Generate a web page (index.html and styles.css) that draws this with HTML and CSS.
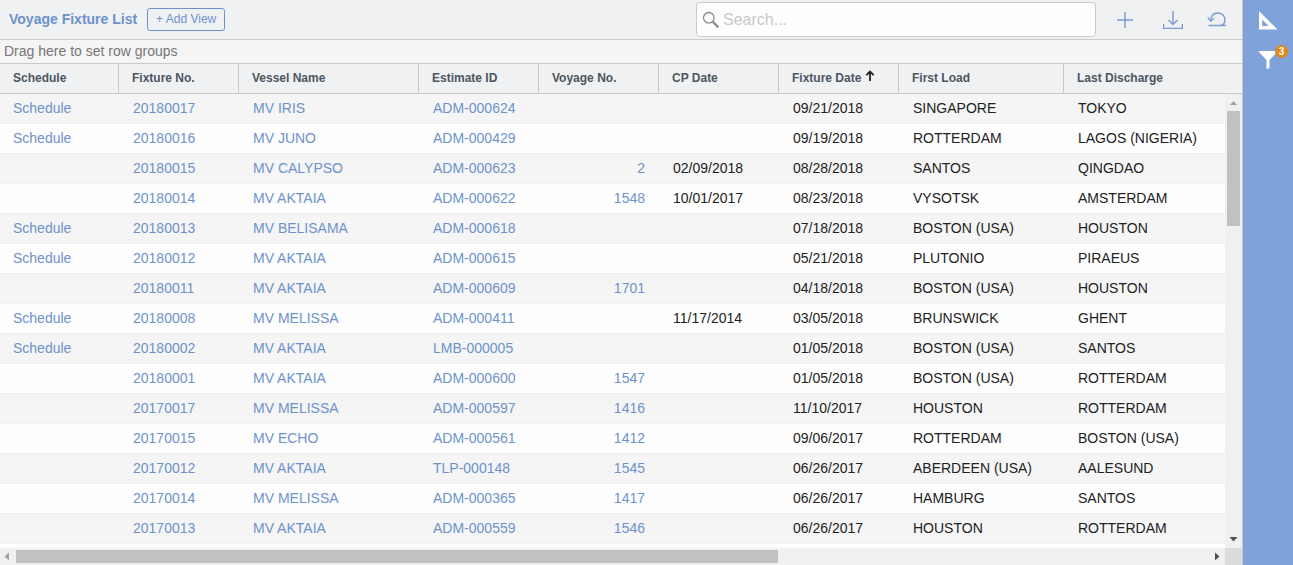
FILE: index.html
```html
<!DOCTYPE html>
<html lang="en">
<head>
<meta charset="utf-8">
<title>Voyage Fixture List</title>
<link rel="stylesheet" href="styles.css">
</head>
<body>
<main class="list">
  <header class="toolbar">
    <h1 class="title">Voyage Fixture List</h1>
    <button class="add-view" type="button">+ Add View</button>
    <label class="search">
      <svg class="search-icon" viewBox="0 0 18 18" aria-hidden="true"><circle cx="6.8" cy="6.8" r="5.3" fill="none" stroke="#8a8a8a" stroke-width="1.3"/><path d="M10.8 10.8L16.4 16.4" stroke="#8a8a8a" stroke-width="2.2"/></svg>
      <input class="search-input" type="search" placeholder="Search..." aria-label="Search">
    </label>
    <div class="actions">
      <button class="icon-button" type="button" aria-label="Add"><svg class="icon" viewBox="0 0 20 20"><path d="M10 2V18M2 10H18"/></svg></button>
      <button class="icon-button" type="button" aria-label="Download"><svg class="icon" viewBox="0 0 20 20"><path d="M10 1V14M5.500 10L10 14.500L14.500 10M.6 14V18.400H19.400V14"/></svg></button>
      <button class="icon-button" type="button" aria-label="Reset"><svg class="icon" viewBox="0 0 20 20"><path d="M3.800 10.500C3.800 6 6.500 3 10.700 3C15 3 18 6 18 9.700C18 12.500 16.500 14.600 14 15.400M1.500 15.500H19"/><path d="M.8 7.500L3.700 11L7.200 8.300"/></svg></button>
    </div>
  </header>
  <div class="groups">Drag here to set row groups</div>
  <section class="grid">
    <table class="table">
      <colgroup><col class="c-first"><col class="c-std"><col class="c-vessel"><col class="c-std"><col class="c-std"><col class="c-std"><col class="c-std"><col class="c-port"><col></colgroup>
      <thead>
        <tr><th>Schedule</th><th>Fixture No.</th><th>Vessel Name</th><th>Estimate ID</th><th>Voyage No.</th><th>CP Date</th><th aria-sort="ascending">Fixture Date<svg class="sort" viewBox="0 0 10 12" aria-hidden="true"><path d="M5 11V1.500M1.300 5.200L5 1.500L8.700 5.200"/></svg></th><th>First Load</th><th>Last Discharge</th></tr>
      </thead>
      <tbody>
        <tr><td><a href="#">Schedule</a></td><td><a href="#">20180017</a></td><td><a href="#">MV IRIS</a></td><td><a href="#">ADM-000624</a></td><td class="num"></td><td></td><td>09/21/2018</td><td>SINGAPORE</td><td>TOKYO</td></tr>
        <tr><td><a href="#">Schedule</a></td><td><a href="#">20180016</a></td><td><a href="#">MV JUNO</a></td><td><a href="#">ADM-000429</a></td><td class="num"></td><td></td><td>09/19/2018</td><td>ROTTERDAM</td><td>LAGOS (NIGERIA)</td></tr>
        <tr><td></td><td><a href="#">20180015</a></td><td><a href="#">MV CALYPSO</a></td><td><a href="#">ADM-000623</a></td><td class="num"><a href="#">2</a></td><td>02/09/2018</td><td>08/28/2018</td><td>SANTOS</td><td>QINGDAO</td></tr>
        <tr><td></td><td><a href="#">20180014</a></td><td><a href="#">MV AKTAIA</a></td><td><a href="#">ADM-000622</a></td><td class="num"><a href="#">1548</a></td><td>10/01/2017</td><td>08/23/2018</td><td>VYSOTSK</td><td>AMSTERDAM</td></tr>
        <tr><td><a href="#">Schedule</a></td><td><a href="#">20180013</a></td><td><a href="#">MV BELISAMA</a></td><td><a href="#">ADM-000618</a></td><td class="num"></td><td></td><td>07/18/2018</td><td>BOSTON (USA)</td><td>HOUSTON</td></tr>
        <tr><td><a href="#">Schedule</a></td><td><a href="#">20180012</a></td><td><a href="#">MV AKTAIA</a></td><td><a href="#">ADM-000615</a></td><td class="num"></td><td></td><td>05/21/2018</td><td>PLUTONIO</td><td>PIRAEUS</td></tr>
        <tr><td></td><td><a href="#">20180011</a></td><td><a href="#">MV AKTAIA</a></td><td><a href="#">ADM-000609</a></td><td class="num"><a href="#">1701</a></td><td></td><td>04/18/2018</td><td>BOSTON (USA)</td><td>HOUSTON</td></tr>
        <tr><td><a href="#">Schedule</a></td><td><a href="#">20180008</a></td><td><a href="#">MV MELISSA</a></td><td><a href="#">ADM-000411</a></td><td class="num"></td><td>11/17/2014</td><td>03/05/2018</td><td>BRUNSWICK</td><td>GHENT</td></tr>
        <tr><td><a href="#">Schedule</a></td><td><a href="#">20180002</a></td><td><a href="#">MV AKTAIA</a></td><td><a href="#">LMB-000005</a></td><td class="num"></td><td></td><td>01/05/2018</td><td>BOSTON (USA)</td><td>SANTOS</td></tr>
        <tr><td></td><td><a href="#">20180001</a></td><td><a href="#">MV AKTAIA</a></td><td><a href="#">ADM-000600</a></td><td class="num"><a href="#">1547</a></td><td></td><td>01/05/2018</td><td>BOSTON (USA)</td><td>ROTTERDAM</td></tr>
        <tr><td></td><td><a href="#">20170017</a></td><td><a href="#">MV MELISSA</a></td><td><a href="#">ADM-000597</a></td><td class="num"><a href="#">1416</a></td><td></td><td>11/10/2017</td><td>HOUSTON</td><td>ROTTERDAM</td></tr>
        <tr><td></td><td><a href="#">20170015</a></td><td><a href="#">MV ECHO</a></td><td><a href="#">ADM-000561</a></td><td class="num"><a href="#">1412</a></td><td></td><td>09/06/2017</td><td>ROTTERDAM</td><td>BOSTON (USA)</td></tr>
        <tr><td></td><td><a href="#">20170012</a></td><td><a href="#">MV AKTAIA</a></td><td><a href="#">TLP-000148</a></td><td class="num"><a href="#">1545</a></td><td></td><td>06/26/2017</td><td>ABERDEEN (USA)</td><td>AALESUND</td></tr>
        <tr><td></td><td><a href="#">20170014</a></td><td><a href="#">MV MELISSA</a></td><td><a href="#">ADM-000365</a></td><td class="num"><a href="#">1417</a></td><td></td><td>06/26/2017</td><td>HAMBURG</td><td>SANTOS</td></tr>
        <tr><td></td><td><a href="#">20170013</a></td><td><a href="#">MV AKTAIA</a></td><td><a href="#">ADM-000559</a></td><td class="num"><a href="#">1546</a></td><td></td><td>06/26/2017</td><td>HOUSTON</td><td>ROTTERDAM</td></tr>
      </tbody>
    </table>
    <div class="scroll-v" aria-hidden="true">
      <svg class="arrow" viewBox="0 0 17 17"><path d="M5 11L8.500 7L12 11Z" fill="#a0a0a0"/></svg>
      <div class="track-v"><div class="thumb-v"></div></div>
      <svg class="arrow" viewBox="0 0 17 17"><path d="M4.500 6H12.500L8.500 10.500Z" fill="#505050"/></svg>
    </div>
  </section>
  <div class="scroll-h" aria-hidden="true">
    <svg class="arrow arrow-left" viewBox="0 0 16 17"><path d="M9 4.500V12.500L4.500 8.500Z" fill="#a0a0a0"/></svg>
    <div class="track-h"><div class="thumb-h"></div></div>
    <svg class="arrow" viewBox="0 0 17 17"><path d="M7 4.500V12.500L11.500 8.500Z" fill="#505050"/></svg>
    <div class="corner"></div>
  </div>
</main>
<aside class="side">
  <button class="side-button" type="button" aria-label="Design"><svg class="side-icon" viewBox="0 0 20 20"><path d="M1 1L19.500 19.500H1ZM4.200 9.500V16H10.700Z" fill="#fff" fill-rule="evenodd"/></svg></button>
  <button class="side-button" type="button" aria-label="Filters, 3 active"><svg class="side-icon" viewBox="0 0 20 20"><path d="M1 1H19V2L11.500 10V18L8.500 19V10L1 2Z" fill="#fff"/></svg><span class="badge">3</span></button>
</aside>
</body>
</html>
```
FILE: styles.css
```css
* { box-sizing: border-box; }

body {
  display: flex;
  height: 100vh;
  margin: 0;
  overflow: hidden;
  background: #fefefe;
  color: #222;
  font: 14px/16px "Liberation Sans", Arial, sans-serif;
}

button { padding: 0; border: 0; background: none; font: inherit; cursor: pointer; }
a { color: #6d92cb; text-decoration: none; }

.list {
  display: flex;
  flex: 1;
  flex-direction: column;
  min-width: 0;
  border-right: 1px solid #c5cad2;
}

.toolbar {
  display: flex;
  align-items: center;
  height: 40px;
  padding: 0 15px 0 9px;
  border-bottom: 1px solid #c8cacc;
  background: #f0f1f3;
}
.title { margin: 0; padding-bottom: 1px; color: #6d92cb; font-size: 14px; line-height: 16px; white-space: nowrap; }
.add-view {
  height: 23px;
  margin-left: 10px;
  padding: 0 8px 2px;
  border: 1px solid #6d92cb;
  border-radius: 3px;
  color: #6d92cb;
  font-size: 12px;
  white-space: nowrap;
}
.search {
  display: flex;
  align-items: center;
  gap: 3px;
  width: 400px;
  height: 35px;
  margin-left: auto;
  padding: 0 5px;
  border: 1px solid #c8cacc;
  border-radius: 4px;
  background: #fefefe;
}
.search-icon { flex: none; width: 18px; height: 18px; }
.search-input {
  flex: 1;
  min-width: 0;
  padding: 0;
  border: 0;
  outline: 0;
  background: none;
  color: #222;
  font: 16px/20px "Liberation Sans", Arial, sans-serif;
}
.search-input::placeholder { color: #c8c8c8; }
.actions { display: flex; gap: 24px; margin-left: 19px; }
.icon-button { display: flex; }
.icon-button:first-child { margin-right: 4px; }
.icon { width: 20px; height: 20px; fill: none; stroke: #789bd2; stroke-width: 1.4; }

.groups {
  height: 24px;
  padding: 3px 4px;
  border-bottom: 1px solid #c8cacc;
  background: #f5f5f5;
  color: #777;
}

.grid { position: relative; flex: 1; min-height: 0; overflow: hidden; }
.table { width: 100%; border-collapse: separate; border-spacing: 0; table-layout: fixed; }
.c-first { width: 119px; }
.c-std { width: 120px; }
.c-vessel { width: 180px; }
.c-port { width: 165px; }
.table th, .table td { height: 30px; padding: 0 14px 2px; text-align: left; white-space: nowrap; }
.table th {
  padding: 0 13px 2px;
  border-right: 1px solid #c8cacc;
  border-bottom: 1px solid #c8cacc;
  background: #f0f1f3;
  color: #4c565f;
  font-size: 12px;
}
.table th:last-child { border-right: 0; }
.table td { border-bottom: 1px solid #f0f0f0; }
.table td:first-child { padding-left: 13px; }
.table tbody tr:nth-child(odd) { background: #f5f5f5; }
.table .num { text-align: right; }
.sort { width: 10px; height: 12px; margin-left: 4px; fill: none; stroke: #222; stroke-width: 1.8; }

.scroll-v {
  position: absolute;
  top: 30px;
  right: 0;
  bottom: 0;
  display: flex;
  flex-direction: column;
  width: 17px;
  background: #f0f0f0;
}
.arrow { flex: none; width: 17px; height: 17px; }
.arrow-left { width: 16px; }
.track-v { flex: 1; padding: 0 2px; }
.thumb-v { height: 27.4%; background: #c1c1c1; }
.scroll-h { display: flex; height: 17px; background: #f0f0f0; }
.track-h { flex: 1; padding: 2px 0; }
.thumb-h { width: 63.9%; height: 100%; background: #c1c1c1; }
.corner { width: 17px; background: #dcdcdc; }

.side {
  display: flex;
  flex: none;
  flex-direction: column;
  align-items: center;
  gap: 20px;
  width: 50px;
  padding-top: 10px;
  background: #7fa2da;
}
.side-button { position: relative; display: flex; }
.side-icon { width: 20px; height: 20px; }
.badge {
  position: absolute;
  top: -5px;
  right: -10px;
  width: 13px;
  height: 13px;
  border-radius: 50%;
  background: #e0871a;
  color: #fff;
  font-size: 10px;
  font-weight: bold;
  line-height: 13px;
  text-align: center;
}
```
